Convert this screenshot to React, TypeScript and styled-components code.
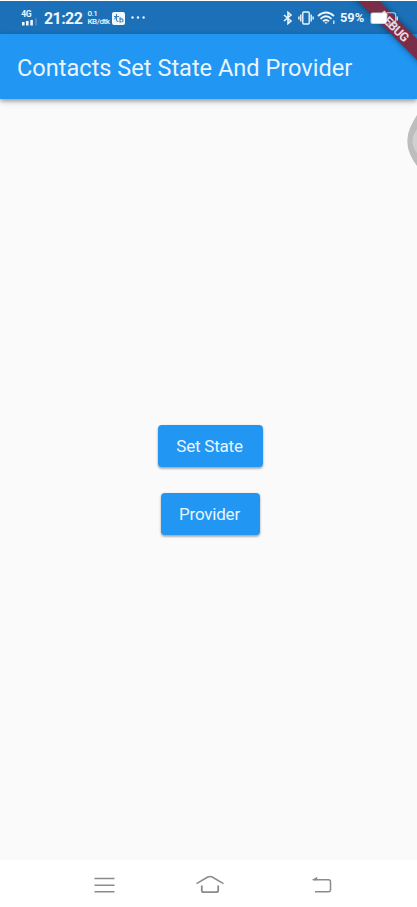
import React from "react";
import styled, { createGlobalStyle } from "styled-components";

const GlobalStyle = createGlobalStyle`
  * { box-sizing: border-box; }
  html, body { margin: 0; padding: 0; background: #fafafa; }
  body { font-family: Roboto, "Noto Sans", sans-serif; overflow: hidden; }
`;

const Screen = styled.div`
  position: relative;
  display: flex;
  flex-direction: column;
  width: 417px;
  height: 907px;
  overflow: hidden;
  background: #fafafa;
  border-top: 1px solid #ffffff;
`;

const StatusBar = styled.header`
  display: flex;
  flex: none;
  justify-content: space-between;
  height: 33px;
  padding: 1px 19px 0 21px;
  background: #1b70b7;
  color: #eef6fd;
`;

const StatusGroup = styled.div`
  position: relative;
  z-index: 3;
  display: flex;
  align-items: center;
  height: 32px;
`;

const Signal = styled.svg`
  display: block;
  margin-right: 6px;
`;

const Clock = styled.span`
  width: 43.5px;
  padding-top: 1px;
  font-size: 16px;
  font-weight: 700;
  line-height: 18px;
  letter-spacing: -0.6px;
`;

const Speed = styled.span`
  display: flex;
  flex-direction: column;
  width: 24.5px;
  font-size: 8px;
  font-weight: 500;
  letter-spacing: -0.45px;
  white-space: nowrap;
`;

const SpeedLine = styled.span`
  display: block;
  height: 8px;
  line-height: 8px;
`;

const StatusIcon = styled.svg<{ $gap: number }>`
  display: block;
  margin-right: ${(p) => p.$gap}px;
`;

const Percent = styled.span`
  width: 30px;
  font-size: 12.8px;
  font-weight: 700;
  line-height: 16px;
`;

const AppBar = styled.div`
  display: flex;
  flex: none;
  align-items: center;
  height: 65px;
  padding: 2px 17px 0;
  background: #2196f3;
  box-shadow: 0 2px 4px rgba(0, 0, 0, 0.3), 0 3px 7px rgba(0, 0, 0, 0.12);
  z-index: 1;
`;

const Title = styled.h1`
  margin: 0;
  color: #e9f5fe;
  font-size: 24.6px;
  font-weight: 400;
  line-height: 30px;
  white-space: nowrap;
  transform: scaleX(0.958);
  transform-origin: left;
`;

const Content = styled.main`
  display: flex;
  flex: 1;
  flex-direction: column;
  align-items: center;
  justify-content: center;
  gap: 26px;
  padding: 1px 0 0 3px;
`;

const RaisedButton = styled.button<{ $width: number }>`
  width: ${(p) => p.$width}px;
  height: 42px;
  padding: 0 1px 0 0;
  border: 0;
  border-radius: 4px;
  background: #2196f3;
  color: #e9f5fe;
  font: 400 17px/20px Roboto, sans-serif;
  letter-spacing: -0.22px;
  box-shadow: 0 2px 2px rgba(0, 0, 0, 0.2), 0 1px 3px rgba(0, 0, 0, 0.2);
`;

const NavBar = styled.nav`
  display: flex;
  flex: none;
  height: 47px;
  background: #ffffff;
  padding: 15px 84px 0 93px;
  justify-content: space-between;
`;

const NavIcon = styled.svg<{ $shift?: number }>`
  display: block;
  margin-left: ${(p) => -(p.$shift ?? 0)}px;
  margin-right: ${(p) => p.$shift ?? 0}px;
  fill: none;
  stroke: #8b8b8b;
  stroke-width: 1.5;
`;

const DebugClip = styled.div`
  position: absolute;
  top: 0;
  right: 0;
  width: 76px;
  height: 76px;
  overflow: hidden;
  z-index: 2;
`;

const DebugRibbon = styled.div`
  position: absolute;
  left: -8.5px;
  top: 17px;
  width: 120px;
  height: 15px;
  padding-left: 2px;
  transform: rotate(45deg);
  background: #7b2c47;
  box-shadow: 0 0 6px rgba(0, 0, 0, 0.45);
  color: #eadbe1;
  font-size: 12.4px;
  font-weight: 700;
  line-height: 16px;
  letter-spacing: -0.5px;
  text-align: center;
`;

const AssistiveKnob = styled.svg`
  position: absolute;
  right: 0;
  top: 109px;
`;

export default function App() {
  return (
    <>
      <GlobalStyle />
      <Screen>
        <StatusBar>
          <StatusGroup>
            <Signal width="17" height="16" viewBox="0 0 17 16" fill="currentColor">
              <text x="0.3" y="7" fontSize="8.6" fontWeight="700" fontFamily="Roboto" letterSpacing="-0.4">4G</text>
              <rect x="1" y="12" width="2.6" height="3.5" />
              <rect x="5" y="11" width="2.6" height="4.5" />
              <rect x="9.3" y="10" width="2.6" height="5.5" />
              <rect x="14" y="8.5" width="2" height="7" opacity=".2" />
            </Signal>
            <Clock>21:22</Clock>
            <Speed>
              <SpeedLine>0.1</SpeedLine>
              <SpeedLine>KB/dtk</SpeedLine>
            </Speed>
            <StatusIcon $gap={6} width="13" height="13" viewBox="0 0 13 13">
              <rect width="13" height="13" rx="2" fill="#f2f8fd" />
              <path d="M2 4.5h5M4.5 2v6q0 1.5 2 1.5M2.4 7.3l2-2.8M8 5v5.5M8 7.2q3-1 3 1t-3 1.8" fill="none" stroke="#3783c0" strokeWidth="1.1" />
            </StatusIcon>
            <StatusIcon $gap={0} width="15" height="4" viewBox="0 0 15 4" fill="currentColor">
              <circle cx="1.5" cy="1.5" r="1.2" />
              <circle cx="7" cy="1.5" r="1.2" />
              <circle cx="12.6" cy="1.5" r="1.2" />
            </StatusIcon>
          </StatusGroup>
          <StatusGroup>
            <StatusIcon $gap={5} width="10" height="14" viewBox="0 0 10 14" fill="none" stroke="currentColor" strokeWidth="1.6">
              <path d="M1 4l7 6L5 12.6V1.4L8 4l-7 6" />
            </StatusIcon>
            <StatusIcon $gap={3} width="16" height="14" viewBox="0 0 16 14" fill="none" stroke="currentColor" strokeWidth="1.4">
              <rect x="4.8" y="1" width="6.4" height="12" rx="1" />
              <path d="M2.8 3.5v7M13.2 3.5v7M.9 5.5v3M15.1 5.5v3" />
            </StatusIcon>
            <StatusIcon $gap={4} width="19" height="14" viewBox="0 0 19 14" fill="none" stroke="currentColor" strokeWidth="1.8">
              <path d="M1 5q8-7 16 0M3.5 7.8q5.5-5 11 0M6 10.3q3-2.6 6 0" />
              <path d="M7.3 11.3h3.4L9 13z" fill="currentColor" stroke="none" />
              <path d="M16.8 9.5v3.5" strokeWidth="1.2" />
            </StatusIcon>
            <Percent>59%</Percent>
            <StatusIcon $gap={0} width="28" height="13" viewBox="0 0 28 13">
              <path d="M17 .8h6.2q2.5 0 2.5 2.5v6.2q0 2.5-2.5 2.5H17" fill="none" stroke="#b9d6ee" strokeWidth="1.1" />
              <rect x=".5" y=".5" width="16" height="11.5" rx="2" fill="#b9d6ee" />
              <rect x="1.5" y="1.3" width="15" height="9.8" rx="1.5" fill="#fff" />
              <path d="M27.2 4.5v4" stroke="#e9f5fe" strokeWidth="1.3" />
            </StatusIcon>
          </StatusGroup>
        </StatusBar>
        <AppBar>
          <Title>Contacts Set State And Provider</Title>
        </AppBar>
        <Content>
          <RaisedButton $width={105}>Set State</RaisedButton>
          <RaisedButton $width={99}>Provider</RaisedButton>
        </Content>
        <NavBar>
          <NavIcon width="22" height="20" viewBox="0 0 22 20">
            <path d="M1.5 3.5h20M1.5 10.2h20M1.5 16.7h20" />
          </NavIcon>
          <NavIcon $shift={3} width="30" height="20" viewBox="0 0 30 20">
            <path d="M1.5 8.7L12.8 2q2.2-1.2 4.4 0l11.3 6.7" />
            <path d="M6.8 10.5v4.7q0 2 2 2h12.4q2 0 2-2v-4.7" strokeWidth="1.8" />
          </NavIcon>
          <NavIcon width="22" height="20" viewBox="0 0 22 20">
            <path d="M2 4.8h15.5q2 0 2 2v7.9q0 2-2 2H4" />
            <path d="M.8 5L6.2 1.8v3.4z" fill="#8b8b8b" stroke="none" />
          </NavIcon>
        </NavBar>
        <AssistiveKnob width="10" height="62" viewBox="0 0 10 62">
          <path d="M10 5Q6 11 3 18Q.3 24 .3 31Q.3 38 3 44Q6 51 10 56Z" fill="#bdbdbd" />
          <path d="M10 19Q5.5 25 5.5 31Q5.5 37 10 43Z" fill="#d0d0d0" />
        </AssistiveKnob>
        <DebugClip>
          <DebugRibbon>DEBUG</DebugRibbon>
        </DebugClip>
      </Screen>
    </>
  );
}
